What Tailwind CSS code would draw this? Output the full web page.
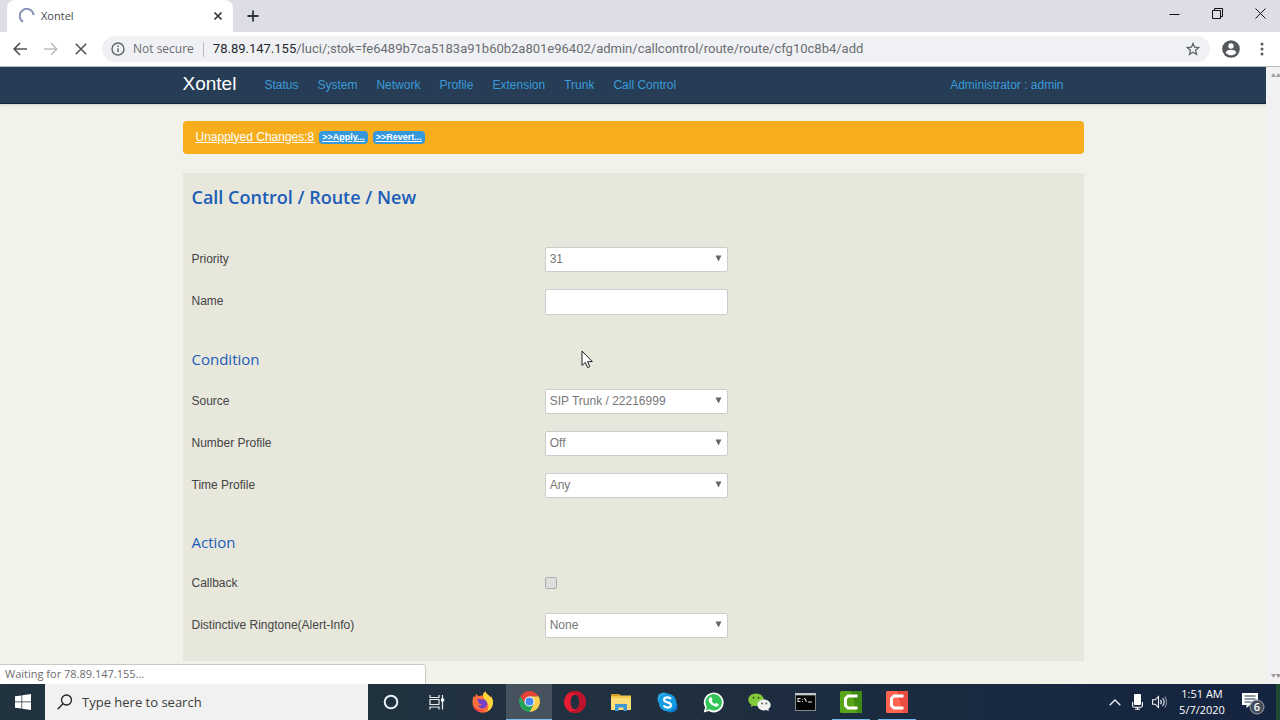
<!DOCTYPE html>
<html lang="en">
<head>
<meta charset="utf-8">
<meta name="viewport" content="width=device-width, initial-scale=1">
<title>Xontel</title>
<script src="https://cdn.jsdelivr.net/npm/@tailwindcss/browser@4"></script>
</head>
<body class="flex h-screen flex-col overflow-hidden bg-[#f1f2e9] font-['Liberation_Sans',Arial,sans-serif] text-xs text-[#404040]">

<!-- Browser window: tab strip -->
<div class="flex h-8 shrink-0 items-stretch bg-[#dcdde6] pl-[7px] font-['Open_Sans','Noto_Sans',sans-serif]">
  <div class="flex w-[226px] items-center rounded-t-lg bg-white pr-[10px] pl-3 text-[#45494d]">
    <svg class="size-4" viewBox="0 0 16 16" fill="none" stroke="#8592b5" stroke-width="2"><path d="M4 13.8A7 7 0 1 1 14.7 7"/></svg>
    <span class="ml-[6px] flex-1 text-[11px]">Xontel</span>
    <button aria-label="Close tab"><svg class="size-[10px]" viewBox="0 0 10 10" stroke="#333639" stroke-width="1.7"><path d="M1.5 1.5l7 7M8.500 1.500l-7 7"/></svg></button>
  </div>
  <button aria-label="New tab" class="ml-[14px]"><svg class="size-3" viewBox="0 0 12 12" stroke="#2f3338" stroke-width="1.8"><path d="M6 .5v11M.5 6h11"/></svg></button>
  <div class="ml-auto flex items-center gap-8 pr-[14px] pb-[5px]">
    <button aria-label="Minimize"><svg class="size-[11px]" viewBox="0 0 11 11" stroke="#111"><path d="M.5 6.500h10"/></svg></button>
    <button aria-label="Restore"><svg class="size-[11px]" viewBox="0 0 11 11" fill="none" stroke="#111"><path d="M.5 2.500h8v8h-8zM2.500 2.500v-2h8v8h-2"/></svg></button>
    <button aria-label="Close"><svg class="size-[11px]" viewBox="0 0 11 11" stroke="#111"><path d="M.5.5l10 10M10.500.5l-10 10"/></svg></button>
  </div>
</div>

<!-- Browser window: toolbar -->
<div class="flex h-[35px] shrink-0 items-center border-b border-[#b4bcc4] bg-white pr-4 pl-[13px] font-['Open_Sans','Noto_Sans',sans-serif]">
  <button aria-label="Back"><svg class="size-[14px]" viewBox="0 0 14 14" fill="none" stroke="#515457" stroke-width="1.7"><path d="M14 7H1.500M7 1L1.200 7 7 13"/></svg></button>
  <button aria-label="Forward" class="ml-[17px]"><svg class="size-[14px]" viewBox="0 0 14 14" fill="none" stroke="#babcbe" stroke-width="1.5"><path d="M0 7h12.500M7 1l5.800 6L7 13"/></svg></button>
  <button aria-label="Stop" class="ml-[17px]"><svg class="size-3" viewBox="0 0 12 12" stroke="#515457" stroke-width="1.6"><path d="M.8.8l10.400 10.400M11.200.8L.8 11.200"/></svg></button>
  <div class="ml-[15px] flex h-[26px] flex-1 items-center rounded-full bg-[#f0f1f4] pr-[10px] pl-[9px] text-[12px]">
    <svg class="size-[14px]" viewBox="0 0 14 14" fill="none" stroke="#5f6368" stroke-width="1.4"><circle cx="7" cy="7" r="6"/><path d="M7 6.200v4M7 3.600v1.500"/></svg>
    <span class="ml-2 text-[#6a6d71]">Not secure</span>
    <span class="mx-[9px] h-[15px] w-px bg-[#b9bbbe]"></span>
    <span class="flex-1 font-[Roboto,sans-serif] text-[13px] text-[#6a6d71]"><span class="text-[#26282b]">78.89.147.155</span>/luci/;stok=fe6489b7ca5183a91b60b2a801e96402/admin/callcontrol/route/route/cfg10c8b4/add</span>
    <button aria-label="Bookmark"><svg class="size-[14px]" viewBox="0 0 14 14" fill="none" stroke="#5f6368" stroke-width="1.300"><path d="M7 1.500l1.600 3.700 4 .4-3 2.700.9 4L7 10.200l-3.500 2.100.9-4-3-2.700 4-.4z"/></svg></button>
  </div>
  <button aria-label="Profile" class="ml-3"><svg class="size-[18px]" viewBox="0 0 18 18"><circle cx="9" cy="9" r="8.800" fill="#54575b"/><circle cx="9" cy="6" r="2.700" fill="#fff"/><path d="M3.600 12.500c.9-2 3-2.700 5.400-2.700s4.500.7 5.400 2.700C13.200 14.400 11.300 15.300 9 15.300s-4.200-.9-5.400-2.800z" fill="#fff"/></svg></button>
  <button aria-label="Menu" class="ml-5"><svg class="h-[14px] w-1" viewBox="0 0 4 14" fill="#54575b"><circle cx="2" cy="2" r="1.500"/><circle cx="2" cy="7" r="1.500"/><circle cx="2" cy="12" r="1.500"/></svg></button>
</div>

<!-- Page -->
<div class="relative flex min-h-0 flex-1">
  <div class="min-w-0 flex-1 overflow-hidden">
    <header class="border-b border-[#16263a] bg-[#263d55] shadow-sm">
      <div class="mx-auto flex h-9 max-w-[901px] items-center text-[#3b9bda]">
        <a href="#" class="pb-[3px] text-[19px] text-white">Xontel</a>
        <nav class="ml-7 flex flex-1 gap-[19px]">
          <a href="#">Status</a><a href="#">System</a><a href="#">Network</a><a href="#">Profile</a><a href="#">Extension</a><a href="#">Trunk</a><a href="#">Call Control</a>
        </nav>
        <a href="#" class="mr-5">Administrator : admin</a>
      </div>
    </header>
    <main class="mx-auto max-w-[901px] pt-[17px]">
      <div class="flex h-[33px] items-center gap-[5px] rounded bg-[#f8ad1d] px-[13px] text-white underline">
        <a href="#" class="pb-[2px] text-[12px]">Unapplyed Changes:8</a>
        <a href="#" class="rounded-sm bg-[#3498db] px-[3px] text-[9px] leading-[13px] font-bold">&gt;&gt;Apply...</a>
        <a href="#" class="rounded-sm bg-[#3498db] px-[3px] text-[9px] leading-[13px] font-bold">&gt;&gt;Revert...</a>
      </div>
      <form class="mt-[19px] h-[488px] bg-[#e7e7dc] px-[9px] text-[#444]">
        <h1 class="flex h-[65px] pt-3 font-['Open_Sans',sans-serif] text-[18px] leading-[25px] font-semibold text-[#1b5db8]">Call Control / Route / New</h1>
        <div class="flex h-[42px] items-center">
          <label for="priority" class="w-2/5">Priority</label>
          <div class="relative w-[183px]"><select id="priority" class="block h-[25px] w-full appearance-none rounded-xs border border-[#ccc] bg-white px-1 text-[#777]"><option>31</option></select><svg class="pointer-events-none absolute top-2 right-[6px] size-[7px]" viewBox="0 0 7 7" fill="#666"><path d="M.5.500h6l-3 6z"/></svg></div>
        </div>
        <div class="flex h-[42px] items-center">
          <label for="name" class="w-2/5">Name</label>
          <input id="name" type="text" class="mt-[2px] h-[26px] w-[183px] rounded-xs border border-[#ccc] bg-white px-1">
        </div>
        <h2 class="flex h-[58px] items-center pt-4 font-['Open_Sans',sans-serif] text-[15px] font-medium text-[#1b5db8]">Condition</h2>
        <div class="flex h-[42px] items-center">
          <label for="source" class="w-2/5">Source</label>
          <div class="relative w-[183px]"><select id="source" class="block h-[25px] w-full appearance-none rounded-xs border border-[#ccc] bg-white px-1 text-[#777]"><option>SIP Trunk / 22216999</option></select><svg class="pointer-events-none absolute top-2 right-[6px] size-[7px]" viewBox="0 0 7 7" fill="#666"><path d="M.5.500h6l-3 6z"/></svg></div>
        </div>
        <div class="flex h-[42px] items-center">
          <label for="number" class="w-2/5">Number Profile</label>
          <div class="relative w-[183px]"><select id="number" class="block h-[25px] w-full appearance-none rounded-xs border border-[#ccc] bg-white px-1 text-[#777]"><option>Off</option></select><svg class="pointer-events-none absolute top-2 right-[6px] size-[7px]" viewBox="0 0 7 7" fill="#666"><path d="M.5.500h6l-3 6z"/></svg></div>
        </div>
        <div class="flex h-[42px] items-center">
          <label for="time" class="w-2/5">Time Profile</label>
          <div class="relative w-[183px]"><select id="time" class="block h-[25px] w-full appearance-none rounded-xs border border-[#ccc] bg-white px-1 text-[#777]"><option>Any</option></select><svg class="pointer-events-none absolute top-2 right-[6px] size-[7px]" viewBox="0 0 7 7" fill="#666"><path d="M.5.500h6l-3 6z"/></svg></div>
        </div>
        <h2 class="flex h-14 items-center pt-4 font-['Open_Sans',sans-serif] text-[15px] font-medium text-[#1b5db8]">Action</h2>
        <div class="flex h-[42px] items-center">
          <label for="callback" class="w-2/5">Callback</label>
          <input id="callback" type="checkbox" class="size-3 appearance-none rounded-xs border border-[#adadad] bg-[#dedede] checked:bg-[#3498db]">
        </div>
        <div class="flex h-[42px] items-center">
          <label for="ringtone" class="w-2/5">Distinctive Ringtone(Alert-Info)</label>
          <div class="relative w-[183px]"><select id="ringtone" class="block h-[25px] w-full appearance-none rounded-xs border border-[#ccc] bg-white px-1 text-[#777]"><option>None</option></select><svg class="pointer-events-none absolute top-2 right-[6px] size-[7px]" viewBox="0 0 7 7" fill="#666"><path d="M.5.500h6l-3 6z"/></svg></div>
        </div>
      </form>
    </main>
  </div>
  <!-- Scroll bar -->
  <div class="flex w-[14px] shrink-0 flex-col items-end justify-between bg-[#f1f1f1] py-[6px]">
    <svg class="h-1 w-[9px]" viewBox="0 0 9 4" fill="#a3a3a3"><path d="M0 4l2.500-4L5 4l2-4 2 2v2z"/></svg>
    <svg class="h-1 w-[9px]" viewBox="0 0 9 4" fill="#a39a9a"><path d="M0 0l2.500 4L5 0l2 4 2-2V0z"/></svg>
  </div>
  <!-- Status bubble -->
  <div class="absolute bottom-0 left-0 h-5 w-[426px] rounded-tr-sm border-t border-r border-[#c9cac5] bg-white pl-[5px] font-['Open_Sans','Noto_Sans',sans-serif] text-[11px] leading-[17px] text-[#6c6c6c]">Waiting for 78.89.147.155...</div>
  <!-- Mouse pointer -->
  <svg class="pointer-events-none absolute top-[283px] left-[581px] h-[19px] w-3" viewBox="0 0 12 19" fill="#fff" stroke="#222"><path d="M1 1v14.500l3.300-3.100 2.300 5.200 2.200-1-2.200-5h4.700z"/></svg>
</div>

<!-- Taskbar -->
<div class="flex h-9 shrink-0 items-stretch border-r-4 border-[#1b4a30] bg-linear-to-r from-[#21333e] via-[#20303f] to-[#14233f] font-['Open_Sans','Noto_Sans',sans-serif]">
  <button aria-label="Start" class="flex w-[45px] items-center justify-center"><svg class="size-4" viewBox="0 0 16 16" fill="#fff"><path d="M0 2.300l6.500-.9v6.200H0zM7.200 1.300L16 0v7.600H7.200zM0 8.300h6.500v6.300L0 13.700zM7.200 8.300H16V16l-8.800-1.300z"/></svg></button>
  <label class="flex w-[323px] items-center bg-[#f1f1f1] pl-3">
    <svg class="size-4" viewBox="0 0 16 16" fill="none" stroke="#222" stroke-width="1.300"><circle cx="9.500" cy="6" r="5"/><path d="M6 9.700L.7 15.300"/></svg>
    <input type="text" aria-label="Search" placeholder="Type here to search" class="mt-[2px] ml-[9px] min-w-0 flex-1 bg-transparent text-[13px] placeholder:text-[#3c3c3c]">
  </label>
  <button aria-label="Cortana" class="flex w-[46px] items-center justify-center"><svg class="size-4" viewBox="0 0 16 16" fill="none" stroke="#e8f0f4" stroke-width="2"><circle cx="8" cy="8" r="6.300"/></svg></button>
  <button aria-label="Task view" class="flex w-[46px] items-center justify-center"><svg class="size-4" viewBox="0 0 16 16" fill="none" stroke="#e6ebee" stroke-width="1.200"><path d="M1 1v2.500h9V1M1 5.500h9v5H1zM1 15.500V13h9v2.500M13.500 1v14.500"/><path d="M12 4.500h3.200v3H12z" fill="#fff" stroke="none"/></svg></button>
  <button aria-label="Firefox" class="flex w-[46px] items-center justify-center"><svg class="size-[22px]" viewBox="0 0 22 22"><path d="M1.500 5l1.700 1.200L4 2.800l2.500 2.400c1.600-.7 3-.9 4.500-.5-.1-1.900 1-3.300 2.500-4.200C14 3 17 4 18.500 6.200l.6-.8c2 3 2.500 6 1.400 9.100C19 19 15.300 21.700 11 21.700 5 21.700.5 17.300.5 11.500.5 9 1 7 1.500 5z" fill="#ff7139"/><path d="M13.500.5C14 3 17 4 18.500 6.200l.6-.8c2 3 2.500 6 1.400 9.100-1 2.800-3 4.900-5.700 6.200 2-3 2.200-6 .7-8.700-1.300-2.300-3.700-3-4.500-7.300-.1-1.900 1-3.300 2.500-4.200z" fill="#ffd43a"/><path d="M5 8.500c1.400-1 3-.8 4 .2 1.600-.9 4-.3 5.200 1.300 1.700 2.200 1 5.500-1.300 6.800-2.700 1.500-6.400.2-7.400-2.600 1.700.8 3.500.3 4.800-1-1.800.2-3.300-.3-3.600-1.800z" fill="#7542c9"/><path d="M1 14c2.600 5.500 7.500 6 11 4.500-2 2.500-7 2.700-9.500-.4z" fill="#f5284f"/></svg></button>
  <button aria-label="Chrome" class="flex w-[46px] items-center justify-center border-b border-[#76b9ed] bg-[#46535f]"><svg class="size-[21px]" viewBox="0 0 22 22"><path d="M20.500 5.500A11 11 0 0 1 11 22l4.300-8.500L11 5.500z" fill="#fcd04a"/><path d="M1.500 5.500A11 11 0 0 0 11 22l4.300-8.500-8.600 0z" fill="#26a35b"/><path d="M1.500 5.500A11 11 0 0 1 20.500 5.500H11L6.700 13.500z" fill="#e24435"/><circle cx="11" cy="11" r="5.300" fill="#fff"/><circle cx="11" cy="11" r="4.200" fill="#4587f3"/></svg></button>
  <button aria-label="Opera" class="flex w-[46px] items-center justify-center"><svg class="size-[22px]" viewBox="0 0 22 22"><path fill-rule="evenodd" d="M11 0a11 11 0 1 0 0 22 11 11 0 0 0 0-22zm0 3.800c2.700 0 4.300 3 4.300 7.200s-1.600 7.200-4.300 7.200S6.700 15.200 6.700 11 8.300 3.800 11 3.800z" fill="#e51c32"/><path d="M11 0c5.500 0 11 4.200 11 11s-5.500 11-11 11c-2 0-3.500-.9-4.500-1.800 6 .8 8.800-3.900 8.800-9.200S12.500 1 6.500 1.800C7.700.8 9 0 11 0z" fill="#b9142b"/></svg></button>
  <button aria-label="File Explorer" class="flex w-[46px] items-center justify-center"><svg class="h-[18px] w-5" viewBox="0 0 20 18"><path d="M0 1h8l1.500 1.500H20V17H0z" fill="#f3c64b"/><path d="M0 1h8v2H0z" fill="#d89b20"/><path d="M0 5h20v12H0z" fill="#fbdc79"/><path d="M4 18v-7h12v7h-3.500v-3.500h-5V18z" fill="#3f98d6"/></svg></button>
  <button aria-label="Skype" class="flex w-[46px] items-center justify-center"><svg class="size-[21px]" viewBox="0 0 22 22"><circle cx="7" cy="7" r="6.500" fill="#29a9ea"/><circle cx="15" cy="15" r="6.500" fill="#0c79d0"/><circle cx="11" cy="11" r="9.300" fill="#159be2"/><path d="M14.600 7.500C13.800 6.200 12.600 5.700 11 5.700c-2.100 0-3.600 1-3.600 2.500 0 3.500 7.200 1.800 7.200 5.300 0 1.700-1.500 2.800-3.700 2.800-1.800 0-3.200-.7-3.800-2.200" fill="none" stroke="#fff" stroke-width="2.300"/></svg></button>
  <button aria-label="WhatsApp" class="flex w-[46px] items-center justify-center"><svg class="size-[21px]" viewBox="0 0 22 22"><path d="M.7 21.500l1.500-5.300A10.400 10.400 0 1 1 6 20z" fill="#fff"/><path d="M3 19.200l1-3.700A8.600 8.600 0 1 1 6.800 18.200z" fill="#31c456"/><path d="M7.600 5.700c.7-.4 1.300-.3 1.600.4l.7 1.700c.2.5-.2 1-.8 1.600.8 1.500 1.900 2.500 3.500 3.200.7-.8 1-1.200 1.500-1l1.900.9c.6.3.5 1.100.1 1.700-.7 1.100-2.100 1.500-3.400 1.100-3.400-1-6-3.500-6.800-6.300-.3-1.200.4-2.600 1.700-3.300z" fill="#fff"/></svg></button>
  <button aria-label="WeChat" class="flex w-[46px] items-center justify-center"><svg class="h-[19px] w-[23px]" viewBox="0 0 23 19"><path d="M8 .5c4.400 0 7.700 2.800 7.700 6.300S12.400 13 8 13c-.9 0-1.700-.1-2.500-.3L2.700 14l.7-2.300C1.500 10.600.3 8.800.3 6.800.3 3.300 3.600.5 8 .5z" fill="#82cb3b"/><circle cx="5.500" cy="4.800" r="1" fill="#31521b"/><circle cx="10.500" cy="4.800" r="1" fill="#31521b"/><path d="M16 6.500c3.700 0 6.700 2.500 6.700 5.600 0 1.700-.9 3.100-2.400 4.200l.6 2-2.400-1.200c-.8.2-1.600.3-2.500.3-3.700 0-6.600-2.300-6.600-5.300s2.900-5.600 6.600-5.600z" fill="#f1f3f3"/><circle cx="14" cy="10.500" r=".9" fill="#555"/><circle cx="18.300" cy="10.500" r=".9" fill="#555"/></svg></button>
  <button aria-label="Command Prompt" class="flex w-[46px] items-center justify-center"><svg class="h-[18px] w-[21px]" viewBox="0 0 21 18"><path d="M0 0h21v18H0z" fill="#85898c"/><path d="M0 0h21v2H0z" fill="#c5c8ca"/><path d="M1 2.500h19V17H1z" fill="#050505"/><path d="M5.500 5.500H3v3h2.500M7.500 6v.8M7.500 8v.8M9.500 5l2 3.800M13 9h4" stroke="#e5e5e5" stroke-width="1.100" fill="none"/></svg></button>
  <button aria-label="Camtasia" class="mx-1 flex w-[38px] items-center justify-center border-b border-[#76b9ed]"><svg class="size-[22px]" viewBox="0 0 22 22"><rect width="22" height="22" rx="1.500" fill="#58a618"/><path d="M11 0h11v22h-5z" fill="#3f8a12"/><path d="M17.500 5H8L5.500 7.500v7L8 17h9.500" fill="none" stroke="#fff" stroke-width="3"/></svg></button>
  <button aria-label="Camtasia Recorder" class="mx-1 flex w-[38px] items-center justify-center border-b border-[#76b9ed]"><svg class="size-[22px]" viewBox="0 0 22 22"><rect width="22" height="22" rx="1.500" fill="#ff6450"/><path d="M11 0h11v22h-5z" fill="#e94c40"/><path d="M17.500 5H8L5.500 7.500v7L8 17h9.500" fill="none" stroke="#fff" stroke-width="3"/></svg></button>
  <div class="ml-auto flex items-center pr-[11px] text-white">
    <button aria-label="Hidden icons"><svg class="h-[7px] w-3" viewBox="0 0 12 7" fill="none" stroke="#e8ebf0" stroke-width="1.400"><path d="M.7 6.300L6 1l5.300 5.300"/></svg></button>
    <svg class="ml-[11px] h-4 w-[11px]" viewBox="0 0 11 16" fill="#fff"><rect x="2" width="7" height="11" rx="1"/><path d="M.6 8v3.500c0 1 .8 1.800 1.800 1.800h6.200c1 0 1.800-.8 1.800-1.800V8M5.500 13v2.500M3 15.300h5" fill="none" stroke="#fff" stroke-width="1.100"/></svg>
    <svg class="ml-[9px] h-[14px] w-[15px]" viewBox="0 0 15 14" fill="none" stroke="#f0f2f5" stroke-width="1.100"><path d="M.6 4.800h2.600L6.500 1.500v11L3.200 9.200H.6zM8.500 4.800c1 1.300 1 3.100 0 4.400M10.500 3c2 2.400 2 5.600 0 8"/><path d="M12.700 1.500c2.400 3.300 2.400 7.700 0 11" stroke="#8892a5"/></svg>
    <div class="ml-3 w-[46px] text-center text-[11px] leading-[16px] whitespace-nowrap"><div>1:51 AM</div><div>5/7/2020</div></div>
    <button aria-label="Notifications" class="ml-[17px] pt-1"><svg class="h-[24px] w-[23px]" viewBox="0 0 23 24"><path d="M0 1h16v12H8l-3.500 3v-3H0z" fill="#fff"/><path d="M2.500 4h11M2.500 7h11M2.500 10h7" stroke="#26344b"/><circle cx="15" cy="15" r="7" fill="#454d5c" stroke="#9aa0aa"/><text x="15" y="19" text-anchor="middle" font-size="11" font-weight="600" fill="#fff">6</text></svg></button>
  </div>
</div>
</body>
</html>
